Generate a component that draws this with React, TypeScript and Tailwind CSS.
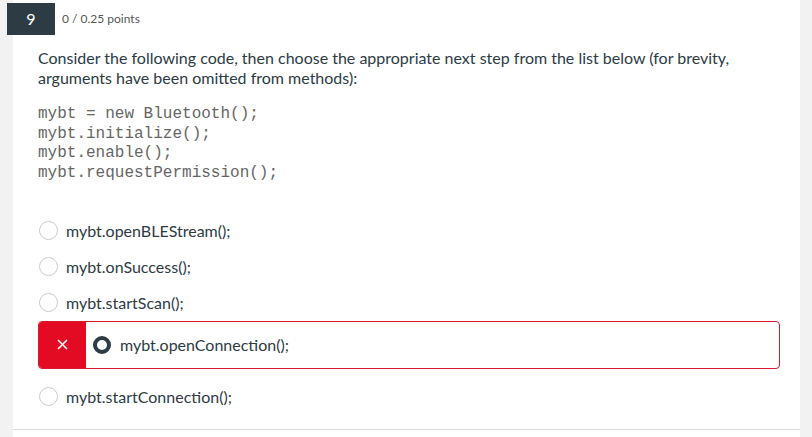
import React from "react";

const Radio = () => (
  <span className="inline-block w-[19px] h-[19px] rounded-full border border-[#c7cdd1] bg-white shrink-0" />
);

const Option = ({ label }: { label: string }) => (
  <div className="h-[36px] flex items-center pl-[39px]">
    <Radio />
    <span className="ml-[8px] text-[16px] text-[#2d3b45]">{label}</span>
  </div>
);

export default function App() {
  return (
    <div
      className="w-[812px] h-[437px] flex bg-[#f2f2f2] overflow-hidden"
      style={{ fontFamily: "Lato, 'Noto Sans', sans-serif" }}
    >
      <div className="w-[13px] shrink-0 bg-[#f2f2f2]" />
      <div className="w-[787px] shrink-0 bg-white flex flex-col">
        <div className="h-[38px] flex items-start pt-[3px]">
          <div className="-ml-[6px] w-[48px] h-[32px] bg-[#2d3b45] text-white text-[16px] flex items-center justify-center">
            9
          </div>
          <div className="ml-[7px] h-[32px] flex items-center text-[12px] text-[#565656]">
            0 / 0.25 points
          </div>
        </div>
        <div className="pl-[25px] pr-[40px] pt-[10px] text-[16px] leading-[19.5px] text-[#2d3b45]">
          Consider the following code, then choose the appropriate next step from the list below (for brevity,
          <br />
          arguments have been omitted from methods):
        </div>
        <div
          className="pl-[25px] pt-[18px] text-[16px] leading-[19.7px] text-[#666666] whitespace-pre"
          style={{ fontFamily: "'Liberation Mono', 'Courier New', monospace" }}
        >
          {"mybt = new Bluetooth();\nmybt.initialize();\nmybt.enable();\nmybt.requestPermission();"}
        </div>
        <div className="pt-[29px] -ml-[13px]">
          <Option label="mybt.openBLEStream();" />
          <Option label="mybt.onSuccess();" />
          <Option label="mybt.startScan();" />
          <div className="ml-[38px] w-[742px] h-[48px] flex rounded-[4px] border-[1.5px] border-[#d9192e] overflow-hidden mb-[10px]">
            <div className="w-[47px] bg-[#e30b23] flex items-center justify-center">
              <svg width="11" height="11" viewBox="0 0 11 11">
                <path d="M1 1 L10 10 M10 1 L1 10" stroke="white" strokeWidth="1.6" />
              </svg>
            </div>
            <div className="flex items-center pl-[7px]">
              <span className="inline-block w-[18px] h-[18px] rounded-full border-[4px] border-[#2d3b45] bg-white" />
              <span className="ml-[9px] text-[16px] text-[#2d3b45]">mybt.openConnection();</span>
            </div>
          </div>
          <Option label="mybt.startConnection();" />
        </div>
        <div className="mt-auto mb-[7px] border-b border-[#dcdcdc]" />
      </div>
      <div className="w-[12px] shrink-0 bg-[#f2f2f2]" />
    </div>
  );
}
